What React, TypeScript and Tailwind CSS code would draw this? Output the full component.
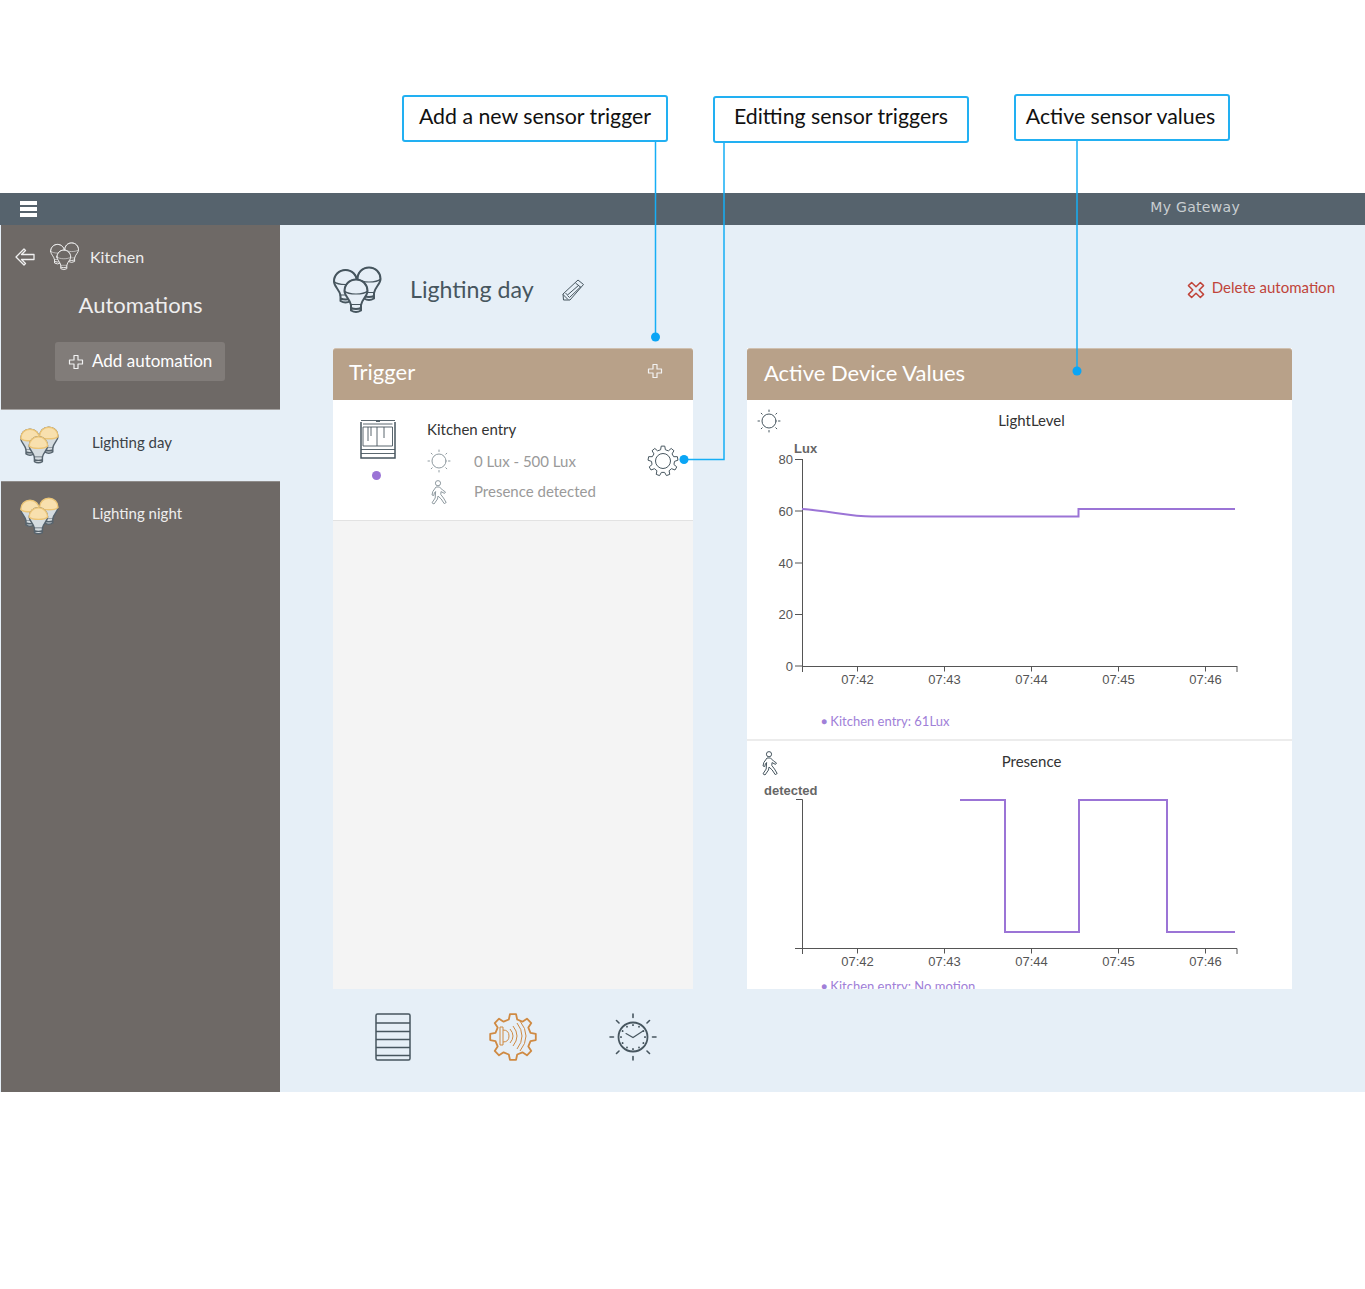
import React from "react";

const purple = "#9b74d6";

const gearPath = (cx: number, cy: number, outer: number, inner: number, teeth: number) => {
  const pts: string[] = [];
  const step = (Math.PI * 2) / teeth;
  for (let i = 0; i < teeth; i++) {
    const a = i * step - Math.PI / 2;
    const list: [number, number][] = [
      [inner, a - step * 0.3],
      [outer, a - step * 0.17],
      [outer, a + step * 0.17],
      [inner, a + step * 0.3],
    ];
    list.forEach(([r, t]) => {
      pts.push(`${(cx + r * Math.cos(t)).toFixed(2)} ${(cy + r * Math.sin(t)).toFixed(2)}`);
    });
  }
  return "M" + pts.join("L") + "Z";
};

const Bulb = ({ x, y, stroke, fill, cap, sw }: { x: number; y: number; stroke: string; fill: string; cap?: string; sw: number }) => (
  <g transform={`translate(${x} ${y})`} stroke={stroke} strokeWidth={sw} strokeLinejoin="round" strokeLinecap="round">
    <path d="M-11.5 0C-11.5 -6.5 -6.5 -11.5 0 -11.5S11.5 -6.5 11.5 0C11.5 5 6 8 5 14H-5C-6 8 -11.5 5 -11.5 0Z" fill={fill} />
    <path d="M-11.5 0C-11.5 -6.5 -6.5 -11.5 0 -11.5S11.5 -6.5 11.5 0C7.5 4 -7.5 4 -11.5 0Z" fill={cap ?? "none"} stroke={cap ? "#ecc577" : stroke} strokeWidth={cap ? sw : sw * 0.6} />
    <path d="M-5 14V19.5Q0 22.5 5 19.5V14M-5 17Q0 19 5 17" fill={fill} />
  </g>
);

const Bulbs = ({ className, stroke, fill, cap, sw = 1.5 }: { className: string; stroke: string; fill: string; cap?: string; sw?: number }) => (
  <svg viewBox="0 0 50 50" className={className}>
    <Bulb x={12.5} y={15.5} stroke={stroke} fill={fill} cap={cap} sw={sw} />
    <Bulb x={36} y={13} stroke={stroke} fill={fill} cap={cap} sw={sw} />
    <Bulb x={23} y={25} stroke={stroke} fill={fill} cap={cap} sw={sw} />
  </svg>
);

const Plus = ({ className, color }: { className: string; color: string }) => (
  <svg viewBox="0 0 16 16" className={className} fill="none" stroke={color} strokeWidth="1.2" strokeLinejoin="round">
    <path d="M6 1.5H10V6H14.5V10H10V14.5H6V10H1.5V6H6Z" />
  </svg>
);

const Sun = ({ className, color }: { className: string; color: string }) => (
  <svg viewBox="0 0 24 24" className={className} fill="none" stroke={color} strokeWidth="1" strokeLinecap="round">
    <circle cx="12" cy="12" r="7" />
    <path d="M12 1V2.5M12 21.5V23M1 12H2.5M21.5 12H23M4.2 4.2L5.2 5.2M18.8 18.8L19.8 19.8M4.2 19.8L5.2 18.8M18.8 5.2L19.8 4.2" />
  </svg>
);

const Walker = ({ className, color }: { className: string; color: string }) => (
  <svg viewBox="0 0 16 25" className={className} fill="none" stroke={color} strokeWidth="1" strokeLinejoin="round">
    <circle cx="7" cy="3.2" r="2.6" />
    <path d="M5 7H8.5L11.5 10L14.5 12L13.5 13.4L10 11.6L9.8 14.5L12.5 18L15.2 22.5L13.2 23.6L10.2 19L7 16L6.5 19L3 24L1 22.8L4.2 18L4.6 11.5L3.4 12.8L2.8 15.5L1 15L1.8 11.5Z" />
  </svg>
);

const Ticks = ({ y }: { y: number }) => (
  <>
    {[
      { x: 857.5, l: "07:42" },
      { x: 944.5, l: "07:43" },
      { x: 1031.5, l: "07:44" },
      { x: 1118.5, l: "07:45" },
      { x: 1205.5, l: "07:46" },
    ].map((t) => (
      <g key={t.l}>
        <path d={`M${t.x} ${y}V${y + 5}`} stroke="#555" />
        <text x={t.x} y={y + 17} textAnchor="middle">{t.l}</text>
      </g>
    ))}
  </>
);

const Chart1 = () => {
  const ticks = [
    { y: 459.5, l: "80" },
    { y: 511, l: "60" },
    { y: 563, l: "40" },
    { y: 614.5, l: "20" },
    { y: 666, l: "0" },
  ];
  return (
    <svg viewBox="747 440 545 262" className="block w-[545px] h-[262px]" fontFamily="'Liberation Sans', sans-serif" fontSize="13" fill="#555">
      <text x="794" y="453" fontWeight="700" fontSize="13" fill="#666">Lux</text>
      <path d="M802.5 459V666.5H1237" fill="none" stroke="#555" strokeWidth="1" />
      {ticks.map((t) => (
        <g key={t.l}>
          <path d={`M795 ${t.y}H802`} stroke="#555" />
          <text x="793" y={t.y + 4.5} textAnchor="end">{t.l}</text>
        </g>
      ))}
      <path d="M802.5 666V672M1237 666V672" stroke="#555" />
      <Ticks y={666.5} />
      <path d="M802 509C830 511 850 516.5 872 516.5H1078.5V509H1235" fill="none" stroke={purple} strokeWidth="2" />
    </svg>
  );
};

const Chart2 = () => (
  <svg viewBox="747 780 545 194" className="block w-[545px] h-[194px]" fontFamily="'Liberation Sans', sans-serif" fontSize="13" fill="#555">
    <text x="764" y="795" fontWeight="700" fill="#666">detected</text>
    <path d="M796 799.5H802.5V954M795 948.5H1237V954" fill="none" stroke="#555" />
    <Ticks y={948.5} />
    <path d="M960 800H1005V932H1079V800H1167V932H1235" fill="none" stroke={purple} strokeWidth="2" />
  </svg>
);

const App: React.FC = () => {
  return (
    <div className="relative w-[1365px] h-[1289px] bg-white pt-[193px] font-['Lato',sans-serif] overflow-hidden">
      <div className="flex flex-col h-[899px]">
        <div className="h-8 bg-[#56636d] flex items-center justify-between">
          <div className="ml-5 w-[17px] flex flex-col gap-[2.5px]">
            <div className="h-[3.5px] bg-white" />
            <div className="h-[3.5px] bg-white" />
            <div className="h-[3.5px] bg-white" />
          </div>
          <div className="mr-[125px] -mt-[3px] text-[14px] tracking-[0.3px] text-[#c9ced1] font-['DejaVu_Sans',sans-serif]">My Gateway</div>
        </div>

        <div className="flex flex-1 min-h-0 bg-[#e6eff7]">
          <aside className="ml-px w-[279px] flex flex-col bg-[#6e6966]">
            <div className="h-[185px] border-b border-[#a5a3a2] px-[14px] pt-[16px]">
              <div className="flex items-center h-8 -ml-px">
                <svg viewBox="0 0 22 20" className="w-[22px] h-5" fill="none" stroke="#f0f0f0" strokeWidth="1.3" strokeLinejoin="round">
                  <path d="M10 2L2 10L10 18L11.5 16.5L7.5 12.5H20V7.5H7.5L11.5 3.5Z" />
                </svg>
                <Bulbs className="ml-[14px] w-[30px] h-[30px]" stroke="#eeeeee" fill="#6e6966" sw={1.6} />
                <span className="ml-[10px] text-[16px] text-[#eeeeee]">Kitchen</span>
              </div>
              <div className="mt-[17px] text-center text-[22px] leading-[30px] text-[#eeeeee]">Automations</div>
              <div className="mt-[22px] ml-[40px] w-[170px] h-[39px] rounded-[3px] bg-[#817c79] flex items-center pl-[13px] gap-[8px] text-[17px] text-white">
                <Plus className="w-4 h-4" color="#f2f2f2" />
                <span className="-mt-px">Add automation</span>
              </div>
            </div>
            <div className="h-[71px] bg-[#e6eff7] flex items-center pl-[19px] text-[15px] text-[#3c4248]">
              <Bulbs className="w-10 h-10" stroke="#56636d" fill="#d5dce0" cap="#f8e0ae" sw={1.8} />
              <span className="ml-[32px] -mt-[6px]">Lighting day</span>
            </div>
            <div className="h-[71px] border-t border-[#8f8c8a] flex items-center pl-[19px] text-[15px] text-[#eeeeee]">
              <Bulbs className="w-10 h-10" stroke="#56636d" fill="#d5dce0" cap="#f8e0ae" sw={1.8} />
              <span className="ml-[32px] -mt-[8px]">Lighting night</span>
            </div>
          </aside>

          <main className="flex-1 pl-[53px] pt-[41px] min-w-0">
            <div className="flex items-center h-[50px] pr-[30px]">
              <Bulbs className="w-[50px] h-[50px]" stroke="#47565f" fill="#e6eff7" sw={2} />
              <span className="ml-[27px] -mt-[4px] text-[23.2px] text-[#47565f]">Lighting day</span>
              <svg viewBox="0 0 24 24" className="ml-[27px] -mt-[2px] w-6 h-6" fill="none" stroke="#47565f" strokeWidth="1" strokeLinejoin="round">
                <path d="M17 2L22.5 6.5L9 22H2.5L2 16ZM14.5 5L20 9.5M4.5 15L6.5 17L18 7M6.5 17.5L8.5 19.5L19.5 9M2 16.5L7 21.5" />
              </svg>
              <div className="ml-auto -mt-[5px] flex items-center gap-[7px] text-[15px] text-[#c0443a]">
                <svg viewBox="0 0 16 16" className="w-[18px] h-[18px] mt-[2px]" fill="none" stroke="#c0443a" strokeWidth="1.3" strokeLinejoin="round">
                  <g transform="rotate(45 8 8)">
                    <path d="M6 0.5H10V6H15.5V10H10V15.5H6V10H0.5V6H6Z" />
                  </g>
                </svg>
                <span className="-mt-[2px]">Delete automation</span>
              </div>
            </div>

            <div className="mt-[32px] flex gap-[54px] h-[641px]">
              <section className="w-[360px] flex flex-col bg-[#f4f4f4]">
                <div className="h-[52px] shrink-0 bg-[#b8a189] rounded-t-[3px] border-t border-[#cfc0b0] flex items-center justify-between pl-4 pr-[30px] text-[22px] text-white">
                  <span className="-mt-[6px]">Trigger</span>
                  <Plus className="w-4 h-4 -mt-[8px]" color="#f2f2f2" />
                </div>
                <div className="h-[121px] shrink-0 bg-white border-b border-[#e2e2e2] flex">
                  <div className="w-[94px] pl-[27px] pt-[19px]">
                    <svg viewBox="0 0 36 40" className="w-9 h-10" fill="none" stroke="#47565f" strokeWidth="1.5">
                      <path d="M1 3V39H35V3" />
                      <path d="M1 1.5H35M3 8H32.5V27H3ZM3 5H32.5M8 8V22M11 8V17M17 8V27M24 8V19M1 30.5H35M1 34.5H35" strokeWidth="0.9" />
                      <path d="M16 2.2H20" strokeWidth="1.4" />
                    </svg>
                    <div className="mt-[12px] ml-[12px] w-[9px] h-[9px] rounded-full bg-[#9b74d6]" />
                  </div>
                  <div className="flex-1 pt-[18px]">
                    <div className="text-[15px] leading-[22px] text-[#333]">Kitchen entry</div>
                    <div className="mt-[8px] flex items-center h-[26px] text-[15px] text-[#9a9a9a]">
                      <Sun className="w-6 h-6" color="#8f9aa0" />
                      <span className="ml-[23px] mt-[1px]">0 Lux - 500 Lux</span>
                    </div>
                    <div className="mt-[5px] flex items-center h-[25px] text-[15px] text-[#9a9a9a]">
                      <Walker className="ml-[4px] w-4 h-[25px] mt-[1px]" color="#8f9aa0" />
                      <span className="ml-[27px]">Presence detected</span>
                    </div>
                  </div>
                  <div className="w-[45px] pt-[45px]">
                    <svg viewBox="0 0 32 32" className="w-8 h-8 -ml-[1px]" fill="none" stroke="#47565f" strokeWidth="1" strokeLinejoin="round">
                      <path d={gearPath(16, 16, 15, 11.5, 9)} />
                      <circle cx="16" cy="16" r="7.5" />
                    </svg>
                  </div>
                </div>
              </section>

              <section className="w-[545px] flex flex-col bg-white overflow-hidden">
                <div className="h-[52px] shrink-0 bg-[#b8a189] rounded-t-[3px] border-t border-[#cfc0b0] flex items-center pl-[17px] pb-[5px] text-[22px] text-white">
                  Active Device Values
                </div>
                <div className="h-[341px] shrink-0 border-b-2 border-[#ececec]">
                  <div className="h-10 flex items-center pl-[10px]">
                    <Sun className="w-6 h-6 mt-[2px]" color="#47565f" />
                    <div className="flex-1 pr-[10px] text-center text-[15px] text-[#333]">LightLevel</div>
                  </div>
                  <Chart1 />
                  <div className="pl-[74px] mt-[10px] text-[13px] leading-[18px] text-[#a080d8]">
                    <span className="text-[10px] align-[1px]">●</span> Kitchen entry: 61Lux
                  </div>
                </div>
                <div className="flex-1 min-h-0 overflow-hidden">
                  <div className="h-[39px] flex items-center pl-[15px]">
                    <Walker className="w-4 h-[25px] mt-[6px]" color="#47565f" />
                    <div className="flex-1 pr-[7px] mt-[1px] text-center text-[15px] text-[#333]">Presence</div>
                  </div>
                  <Chart2 />
                  <div className="pl-[74px] mt-[3px] text-[13px] leading-[18px] text-[#a080d8]">
                    <span className="text-[10px] align-[1px]">●</span> Kitchen entry: No motion
                  </div>
                </div>
              </section>
            </div>

            <div className="h-[103px] flex items-center pl-[42px] pb-[8px]">
              <svg viewBox="0 0 36 48" className="w-9 h-12" fill="none" stroke="#47565f" strokeWidth="1.5">
                <rect x="1" y="1" width="34" height="46" rx="1.5" />
                <path d="M1 10H35M1 18.5H35M1 26.5H35M1 34.5H35M1 42.5H35" />
              </svg>
              <svg viewBox="0 0 48 48" className="ml-[78px] w-12 h-12" fill="none" stroke="#cf8a43" strokeWidth="1.8" strokeLinejoin="round">
                <path d={gearPath(24, 24, 23, 18, 8)} />
                <path d="M11 14H14V32H11ZM14 17Q20 17 20 23T14 29" strokeWidth="1" />
                <path d="M21 16Q27 23 21 30M24 13Q32 23 24 33M28 10Q38 23 28 36M31 8Q43 23 31 38" strokeWidth="1" />
              </svg>
              <svg viewBox="0 0 48 48" className="ml-[72px] w-12 h-12" fill="none" stroke="#47565f" strokeLinecap="round">
                <circle cx="24" cy="24" r="14.5" strokeWidth="1.8" />
                <path d="M24 1V4.5M24 43.5V47M1 24H4.5M43.5 24H47M7.5 7.5L10 10M38 38L40.5 40.5M7.5 40.5L10 38M38 10L40.5 7.5" strokeWidth="1.6" />
                <path d="M17 20.5L24 24.5L34 18" strokeWidth="1.1" />
                <path d="M24 12V12.2M24 36V36.2M12 24V24.2M36 24V24.2M18 13.6V13.8M30 13.6V13.8M13.6 18V18.2M34.4 18V18.2M13.6 30V30.2M34.4 30V30.2M18 34.4V34.6M30 34.4V34.6" strokeWidth="1.8" />
              </svg>
            </div>
          </main>
        </div>
      </div>

      <svg viewBox="0 0 1365 1289" className="absolute inset-0 w-[1365px] h-[1289px] pointer-events-none" fill="none">
        <g stroke="#16aef5" strokeWidth="1.5">
          <path d="M655.5 141V337" />
          <path d="M724 142V459.5H684" />
          <path d="M1077 140V371" />
        </g>
        <g fill="#0aa5f5">
          <circle cx="655.5" cy="337" r="4.5" />
          <circle cx="684" cy="459.5" r="4.5" />
          <circle cx="1077" cy="371" r="4.5" />
        </g>
      </svg>
      <div className="absolute left-[402px] top-[95px] w-[266px] h-[47px] pb-[4px] bg-white border-2 border-[#22b0f2] rounded-[3px] flex items-center justify-center text-[21.3px] text-[#111]">Add a new sensor trigger</div>
      <div className="absolute left-[713px] top-[96px] w-[256px] h-[47px] pb-[6px] bg-white border-2 border-[#22b0f2] rounded-[3px] flex items-center justify-center text-[21.3px] text-[#111]">Editting sensor triggers</div>
      <div className="absolute left-[1014px] top-[94px] w-[216px] h-[47px] pb-[2px] pr-[3px] bg-white border-2 border-[#22b0f2] rounded-[3px] flex items-center justify-center text-[21.3px] text-[#111]">Active sensor values</div>
    </div>
  );
};

export default App;
